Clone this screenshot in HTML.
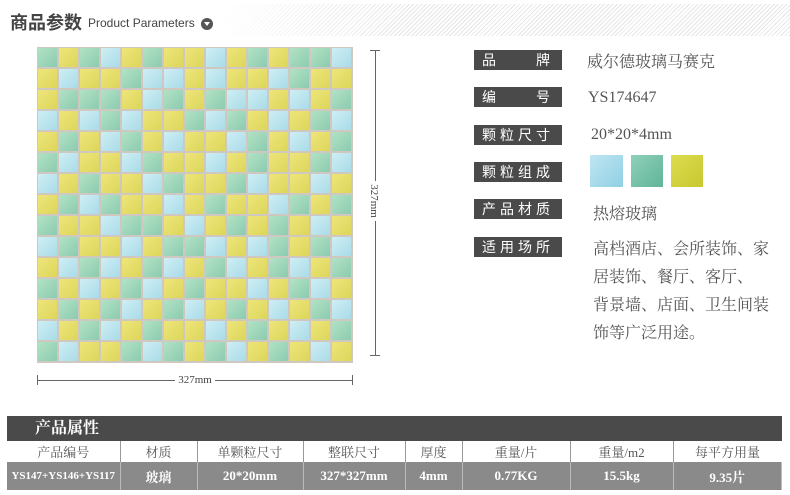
<!DOCTYPE html>
<html><head><meta charset="utf-8"><style>
*{margin:0;padding:0;box-sizing:border-box}
body{width:790px;height:495px;background:#fff;position:relative;overflow:hidden;font-family:"Liberation Serif","Noto Serif CJK SC",serif;color:#555}
.abs{position:absolute}
.hatch{left:215px;top:4px;width:575px;height:32px;background:repeating-linear-gradient(135deg,#fff 0 2px,#e6e6e6 2px 3px);-webkit-mask:linear-gradient(90deg,transparent,#000 30%)}
.grid{left:37px;top:47px;width:316px;height:316px;background:#cfc8c0;display:grid;grid-template-columns:repeat(15,19px);grid-auto-rows:19px;gap:2px;padding:1px}
.grid i{display:block}
.y{background:linear-gradient(135deg,#eee57a,#dcd65a)}
.b{background:linear-gradient(135deg,#cfeef4,#a9dbe8)}
.g{background:linear-gradient(135deg,#b2e2c4,#8ccbb0)}
.lab{left:474px;width:88px;height:20px;background:#4a4a4a;color:#fff;font-family:"Liberation Sans","Noto Sans CJK SC",sans-serif;font-size:14px;line-height:20px;padding:0 8px;letter-spacing:4px}
.val{left:590px;font-size:16px;color:#555}
table{position:absolute;left:7px;top:441px;width:775px;border-collapse:collapse;font-size:13px;text-align:center}
td{height:21px;border-right:1px solid #999;padding:0}
tr.r2 td{background:#8a8a8a;color:#fff;height:28px;font-weight:bold;border-right:1px solid #bbb}
td:last-child{border-right:none}
</style></head><body>
<div class="abs hatch"></div>
<div class="abs" style="left:10px;top:9px;font-family:'Noto Sans CJK SC',sans-serif;font-weight:bold;font-size:18px;color:#444">商品参数</div>
<div class="abs" style="left:88px;top:16px;font-family:'Liberation Sans',sans-serif;font-size:12px;color:#444">Product Parameters</div>
<div class="abs" style="left:201px;top:18px;width:12px;height:12px;border-radius:50%;background:#555"></div>
<div class="abs" style="left:204px;top:22px;width:0;height:0;border-left:3px solid transparent;border-right:3px solid transparent;border-top:4px solid #fff"></div>

<div class="abs grid">
<i class=g></i><i class=y></i><i class=g></i><i class=b></i><i class=y></i><i class=g></i><i class=y></i><i class=y></i><i class=b></i><i class=y></i><i class=g></i><i class=y></i><i class=g></i><i class=g></i><i class=b></i>
<i class=y></i><i class=b></i><i class=y></i><i class=y></i><i class=g></i><i class=b></i><i class=b></i><i class=y></i><i class=b></i><i class=y></i><i class=y></i><i class=b></i><i class=g></i><i class=y></i><i class=y></i>
<i class=y></i><i class=g></i><i class=g></i><i class=g></i><i class=y></i><i class=b></i><i class=g></i><i class=y></i><i class=g></i><i class=b></i><i class=b></i><i class=y></i><i class=b></i><i class=y></i><i class=g></i>
<i class=b></i><i class=y></i><i class=b></i><i class=g></i><i class=b></i><i class=y></i><i class=y></i><i class=g></i><i class=b></i><i class=g></i><i class=y></i><i class=b></i><i class=y></i><i class=g></i><i class=b></i>
<i class=y></i><i class=g></i><i class=y></i><i class=b></i><i class=g></i><i class=y></i><i class=b></i><i class=y></i><i class=y></i><i class=b></i><i class=g></i><i class=y></i><i class=b></i><i class=y></i><i class=g></i>
<i class=g></i><i class=b></i><i class=y></i><i class=y></i><i class=b></i><i class=g></i><i class=y></i><i class=y></i><i class=b></i><i class=y></i><i class=g></i><i class=y></i><i class=y></i><i class=g></i><i class=b></i>
<i class=b></i><i class=y></i><i class=g></i><i class=y></i><i class=y></i><i class=b></i><i class=g></i><i class=y></i><i class=y></i><i class=g></i><i class=b></i><i class=y></i><i class=y></i><i class=b></i><i class=y></i>
<i class=y></i><i class=g></i><i class=b></i><i class=g></i><i class=y></i><i class=y></i><i class=b></i><i class=y></i><i class=g></i><i class=y></i><i class=y></i><i class=b></i><i class=g></i><i class=y></i><i class=g></i>
<i class=g></i><i class=y></i><i class=y></i><i class=b></i><i class=g></i><i class=g></i><i class=y></i><i class=b></i><i class=y></i><i class=g></i><i class=y></i><i class=g></i><i class=y></i><i class=b></i><i class=y></i>
<i class=b></i><i class=g></i><i class=y></i><i class=y></i><i class=b></i><i class=y></i><i class=g></i><i class=g></i><i class=b></i><i class=y></i><i class=b></i><i class=g></i><i class=y></i><i class=g></i><i class=b></i>
<i class=y></i><i class=b></i><i class=g></i><i class=b></i><i class=y></i><i class=g></i><i class=b></i><i class=y></i><i class=g></i><i class=b></i><i class=y></i><i class=g></i><i class=b></i><i class=y></i><i class=g></i>
<i class=g></i><i class=y></i><i class=b></i><i class=y></i><i class=g></i><i class=b></i><i class=y></i><i class=g></i><i class=y></i><i class=y></i><i class=b></i><i class=y></i><i class=g></i><i class=b></i><i class=y></i>
<i class=y></i><i class=g></i><i class=y></i><i class=g></i><i class=b></i><i class=y></i><i class=g></i><i class=b></i><i class=y></i><i class=g></i><i class=y></i><i class=b></i><i class=y></i><i class=g></i><i class=b></i>
<i class=b></i><i class=y></i><i class=g></i><i class=b></i><i class=y></i><i class=g></i><i class=y></i><i class=y></i><i class=b></i><i class=y></i><i class=g></i><i class=y></i><i class=b></i><i class=y></i><i class=g></i>
<i class=g></i><i class=b></i><i class=y></i><i class=y></i><i class=g></i><i class=b></i><i class=g></i><i class=y></i><i class=g></i><i class=b></i><i class=y></i><i class=g></i><i class=y></i><i class=b></i><i class=y></i>
</div>

<div class="abs" style="left:370px;top:50px;width:10px;height:1px;background:#666"></div>
<div class="abs" style="left:375px;top:50px;width:1px;height:305px;background:#666"></div>
<div class="abs" style="left:370px;top:355px;width:10px;height:1px;background:#666"></div>
<div class="abs" style="left:354px;top:193px;width:40px;height:16px;background:#fff;transform:rotate(90deg);font-size:11px;text-align:center;color:#444;line-height:16px">327mm</div>
<div class="abs" style="left:37px;top:375px;width:1px;height:10px;background:#666"></div>
<div class="abs" style="left:37px;top:380px;width:315px;height:1px;background:#666"></div>
<div class="abs" style="left:352px;top:375px;width:1px;height:10px;background:#666"></div>
<div class="abs" style="left:175px;top:372px;width:40px;height:16px;background:#fff;font-size:11px;text-align:center;color:#444;line-height:16px">327mm</div>

<div class="abs lab" style="top:50px;display:flex;justify-content:space-between"><span>品</span><span>牌</span></div>
<div class="abs val" style="top:49px;left:587px">威尔德玻璃马赛克</div>
<div class="abs lab" style="top:87px;display:flex;justify-content:space-between"><span>编</span><span>号</span></div>
<div class="abs val" style="top:89px;left:588px">YS174647</div>
<div class="abs lab" style="top:125px">颗粒尺寸</div>
<div class="abs val" style="top:126px;left:591px">20*20*4mm</div>
<div class="abs lab" style="top:162px">颗粒组成</div>
<div class="abs" style="left:590px;top:155px;width:33px;height:32px;background:linear-gradient(135deg,#bfe6f2,#8fd0e4)"></div>
<div class="abs" style="left:631px;top:155px;width:32px;height:32px;background:linear-gradient(135deg,#8fd0b8,#5fb59a)"></div>
<div class="abs" style="left:671px;top:155px;width:32px;height:32px;background:linear-gradient(135deg,#dcdc50,#c8c830)"></div>
<div class="abs lab" style="top:199px">产品材质</div>
<div class="abs val" style="top:201px;left:593px">热熔玻璃</div>
<div class="abs lab" style="top:237px">适用场所</div>
<div class="abs val" style="top:236px;left:593px;width:200px;line-height:28px;white-space:nowrap">高档酒店、会所装饰、家<br>居装饰、餐厅、客厅、<br>背景墙、店面、卫生间装<br>饰等广泛用途。</div>

<div class="abs" style="left:7px;top:416px;width:775px;height:25px;background:#4a4a4a;color:#fff;font-size:16px;font-weight:bold;line-height:25px;padding-left:28px">产品属性</div>
<table>
<tr><td style="width:113px">产品编号</td><td style="width:77px">材质</td><td style="width:106px">单颗粒尺寸</td><td style="width:102px">整联尺寸</td><td style="width:57px">厚度</td><td style="width:108px">重量/片</td><td style="width:103px">重量/m2</td><td>每平方用量</td></tr>
<tr class="r2"><td style="font-size:11px">YS147+YS146+YS117</td><td>玻璃</td><td>20*20mm</td><td>327*327mm</td><td>4mm</td><td>0.77KG</td><td>15.5kg</td><td>9.35片</td></tr>
</table>
</body></html>
